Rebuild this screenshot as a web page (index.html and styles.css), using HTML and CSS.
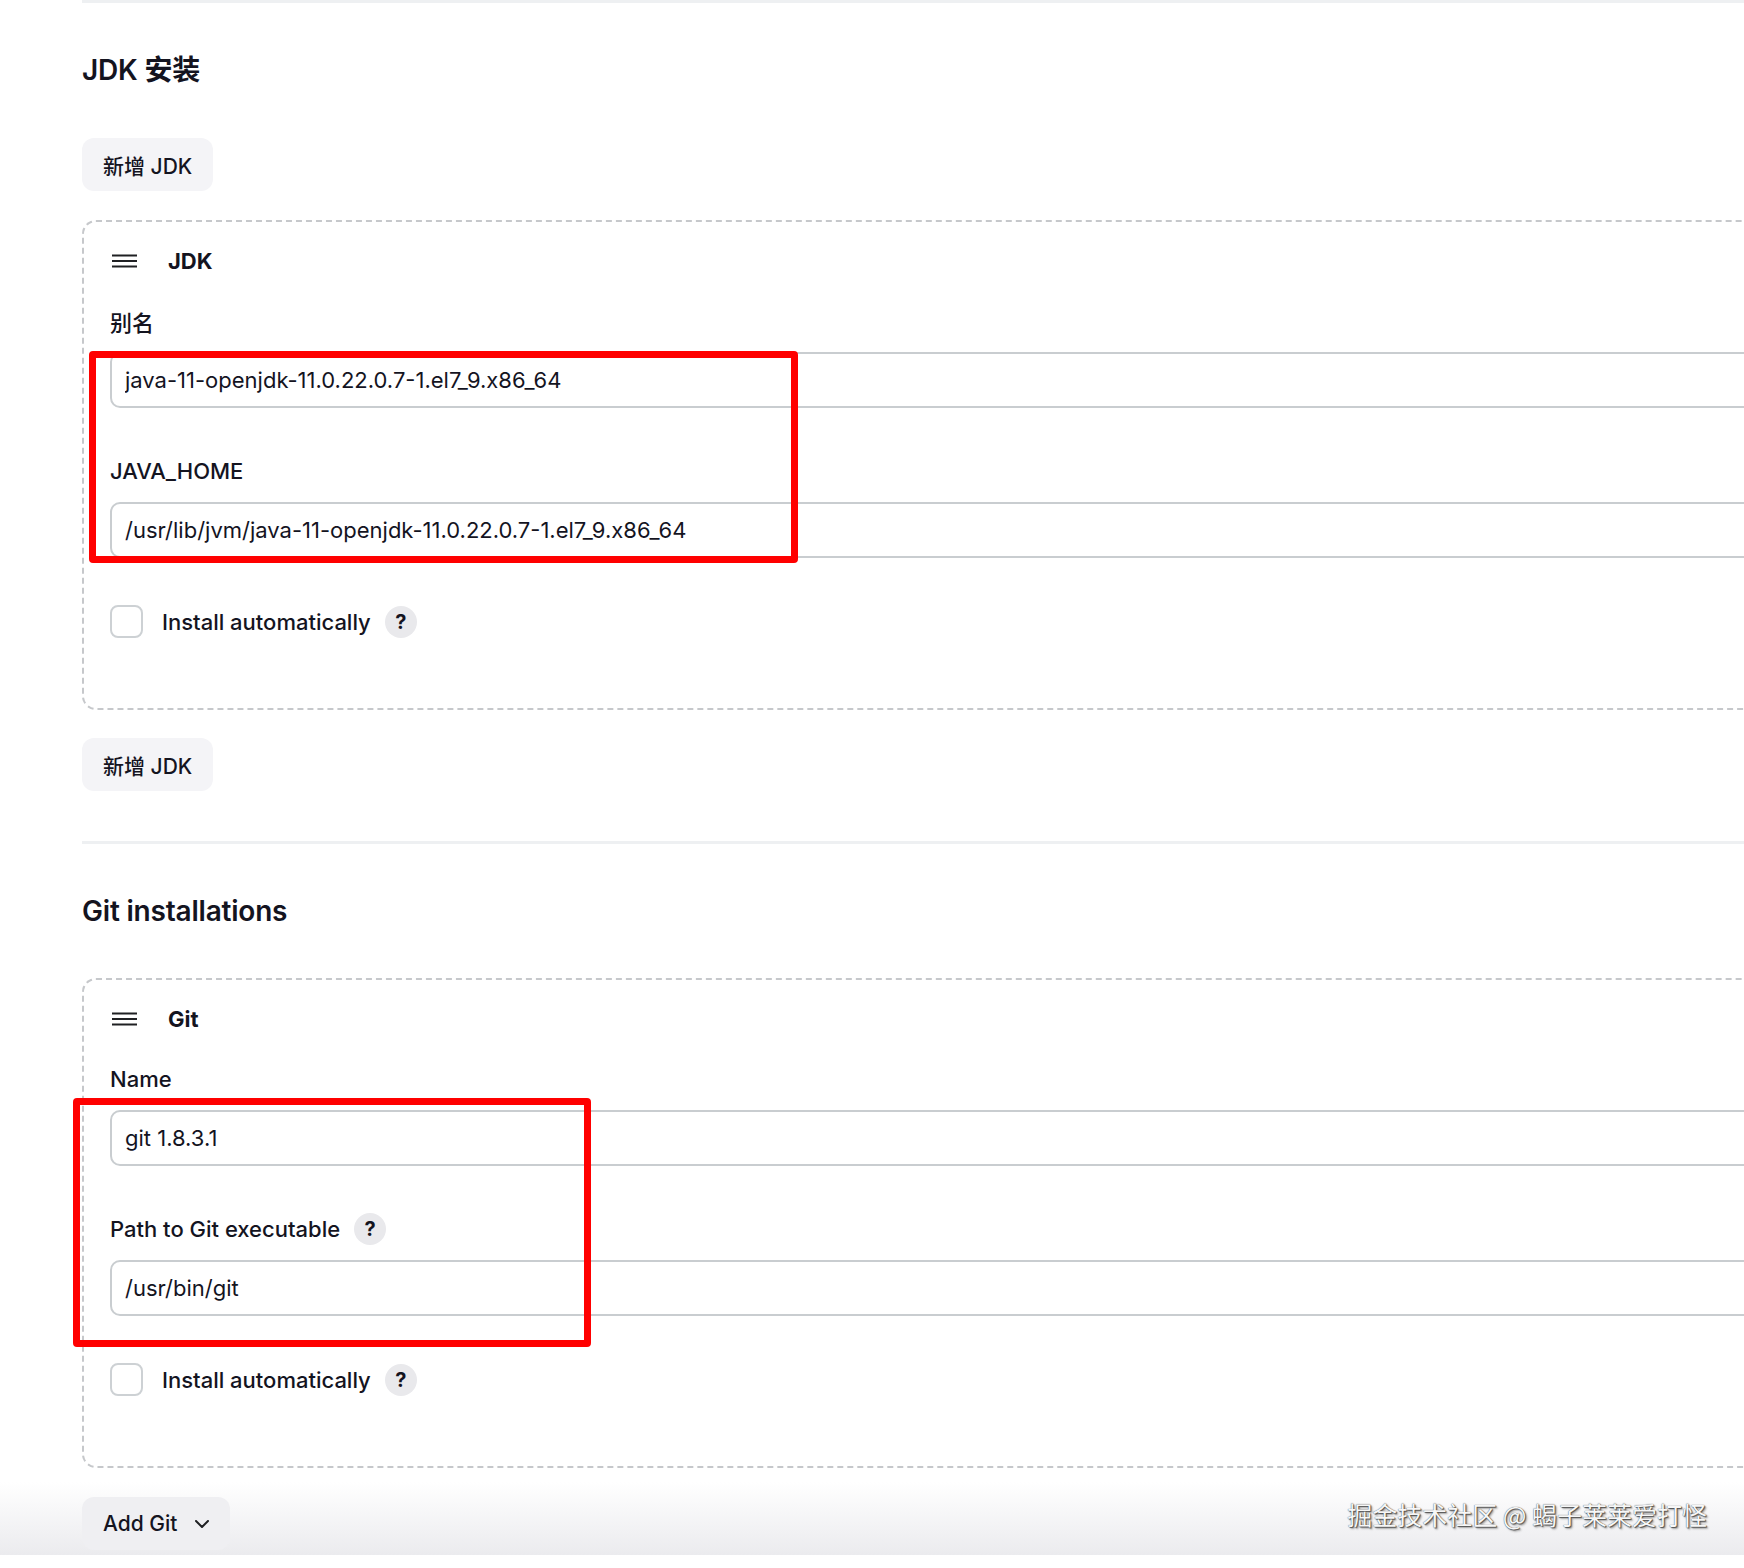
FILE: index.html
```html
<!DOCTYPE html>
<html lang="zh-CN">
<head>
  <meta charset="UTF-8" />
  <title>Tools - Jenkins</title>
  <link rel="stylesheet" href="styles.css">
</head>
<body>

  <div class="page">
    <div class="top-rule"></div>

    <section class="section">
      <h2 class="section-title">JDK 安装</h2>
      <button class="btn" type="button">新增 JDK</button>

      <div class="chunk">
        <div class="chunk-header">
          <svg class="handle" width="25" height="14" viewBox="0 0 25 14">
            <path d="M0 1.5h25M0 7h25M0 12.5h25" stroke="#1f2023" stroke-width="2" fill="none" />
          </svg>
          <span class="chunk-title">JDK</span>
        </div>

        <div class="field first">
          <div class="field-label">别名</div>
          <input class="text-input" type="text" value="java-11-openjdk-11.0.22.0.7-1.el7_9.x86_64">
        </div>

        <div class="field">
          <div class="field-label">JAVA_HOME</div>
          <input class="text-input" type="text" value="/usr/lib/jvm/java-11-openjdk-11.0.22.0.7-1.el7_9.x86_64">
        </div>

        <div class="check-row">
          <span class="checkbox"></span>
          <span class="check-label">Install automatically</span>
          <span class="help">?</span>
        </div>
      </div>

      <button class="btn btn-after" type="button">新增 JDK</button>
    </section>

    <div class="rule"></div>

    <section class="section">
      <h2 class="section-title">Git installations</h2>

      <div class="chunk chunk-git">
        <div class="chunk-header">
          <svg class="handle" width="25" height="14" viewBox="0 0 25 14">
            <path d="M0 1.5h25M0 7h25M0 12.5h25" stroke="#1f2023" stroke-width="2" fill="none" />
          </svg>
          <span class="chunk-title">Git</span>
        </div>

        <div class="field first">
          <div class="field-label">Name</div>
          <input class="text-input" type="text" value="git 1.8.3.1">
        </div>

        <div class="field">
          <div class="field-label">Path to Git executable <span class="help">?</span></div>
          <input class="text-input" type="text" value="/usr/bin/git">
        </div>

        <div class="check-row">
          <span class="checkbox"></span>
          <span class="check-label">Install automatically</span>
          <span class="help">?</span>
        </div>
      </div>
    </section>

    <!-- рамки-аннотации поверх скриншота -->
    <div class="mark mark-jdk"></div>
    <div class="mark mark-git"></div>
  </div>

  <div class="bottom-bar">
    <button class="btn btn-dropdown" type="button">
      Add Git
      <svg width="14" height="8" viewBox="0 0 14 8">
        <path d="M1 1l6 6 6-6" stroke="#1f2023" stroke-width="2" fill="none" stroke-linecap="round" stroke-linejoin="round" />
      </svg>
    </button>
    <div class="watermark">掘金技术社区 @ 蝎子莱莱爱打怪</div>
  </div>

</body>
</html>
```

FILE: styles.css
```css
/* Общие стили */
body {
  margin: 0;
  background: #fff;
  color: #14141f;
  font-family: Inter, "Noto Sans", "Noto Sans CJK SC", sans-serif;
  overflow: hidden;
}

.page {
  position: relative;
  padding-left: 82px;
  width: 1800px;
}

.top-rule,
.rule {
  height: 3px;
  background: #eef0f2;
}

.rule {
  margin-top: 50px;
}

.section-title {
  margin: 47px 0 0;
  font-size: 28px;
  line-height: 40px;
  font-weight: 600;
  letter-spacing: -0.2px;
}

/* Кнопки */
.btn {
  display: inline-flex;
  align-items: center;
  gap: 18px;
  height: 53px;
  padding: 0 21px;
  margin-top: 48px;
  border: none;
  border-radius: 12px;
  background: #f4f4f7;
  color: #14141f;
  font-family: inherit;
  font-size: 21px;
  font-weight: 500;
  cursor: pointer;
}

.btn-after {
  margin-top: 28px;
}

/* Повторяемый блок */
.chunk {
  margin-top: 29px;
  padding: 24px 0 70px 26px;
  border: 2px dashed #c6c8cb;
  border-radius: 14px;
}

.section-title + .chunk {
  margin-top: 47px;
}

.chunk-header {
  display: flex;
  align-items: center;
  height: 30px;
  padding-left: 2px;
  gap: 31px;
}

.chunk-title {
  font-size: 22px;
  font-weight: 700;
}

.field {
  margin-top: 47px;
}

.field.first {
  margin-top: 29px;
}

.field-label {
  display: flex;
  align-items: center;
  gap: 14px;
  height: 32px;
  margin-bottom: 15px;
  font-size: 22px;
  font-weight: 500;
}

.text-input {
  display: block;
  box-sizing: border-box;
  width: 100%;
  height: 56px;
  padding: 0 13px;
  border: 2px solid #c9cdd0;
  border-radius: 10px;
  background: #fff;
  color: #14141f;
  font-family: inherit;
  font-size: 22px;
  outline: none;
}

.check-row {
  display: flex;
  align-items: center;
  height: 33px;
  margin-top: 47px;
}

.checkbox {
  box-sizing: border-box;
  width: 33px;
  height: 33px;
  border: 2px solid #cdd1d4;
  border-radius: 8px;
}

.check-label {
  margin-left: 19px;
  font-size: 22px;
  font-weight: 500;
}

.help {
  display: inline-flex;
  align-items: center;
  justify-content: center;
  width: 32px;
  height: 32px;
  border-radius: 50%;
  background: #e9e9ec;
  font-size: 20px;
  font-weight: 700;
}

.check-row .help {
  margin-left: 14px;
}

/* Нижняя панель */
.bottom-bar {
  position: relative;
  margin-top: 14px;
  padding: 15px 0 5px 82px;
  background: linear-gradient(rgba(255, 255, 255, 0), #ebebee);
}

.btn-dropdown {
  margin-top: 0;
  background: #efeff2;
}

.watermark {
  position: absolute;
  right: 37px;
  top: 14px;
  font-family: "Noto Sans CJK SC", sans-serif;
  font-size: 25px;
  color: #f7f7f7;
  text-shadow: 0 0 1px #333, 1px 1px 1px #555, 2px 2px 2px #aaa;
}

/* Красные рамки */
.mark {
  position: absolute;
  border: 7px solid #ff0000;
  border-radius: 4px;
}

.mark-jdk {
  left: 89px;
  top: 351px;
  width: 695px;
  height: 198px;
}

.mark-git {
  left: 73px;
  top: 1098px;
  width: 504px;
  height: 235px;
}
```
